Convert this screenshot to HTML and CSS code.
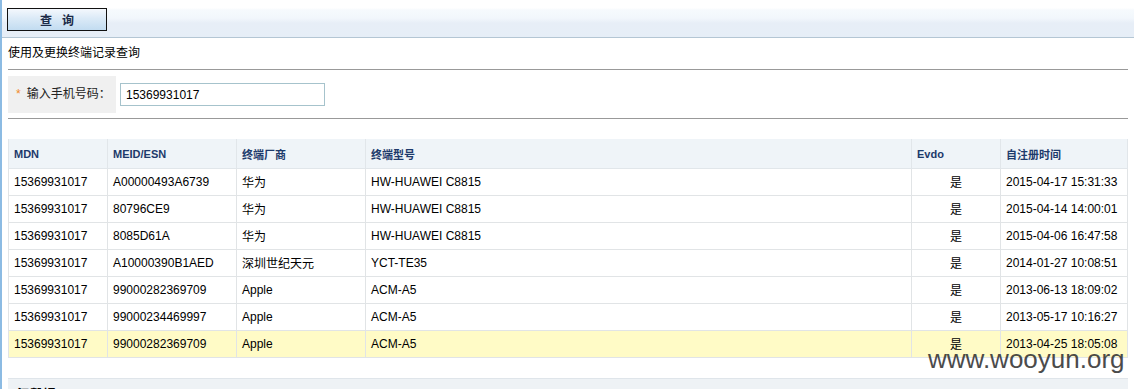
FILE: index.html
```html
<!DOCTYPE html>
<html lang="zh-CN">
<head>
    <meta charset="UTF-8">
    <title>使用及更换终端记录查询</title>
    <link rel="stylesheet" href="styles.css">
</head>
<body>
    <div class="page">
        <div class="toolbar">
            <button class="query-btn">查&nbsp;&nbsp;&nbsp;询</button>
        </div>
        <div class="main">
            <div class="title">使用及更换终端记录查询</div>
            <div class="form-row">
                <div class="label"><span class="star">*</span>输入手机号码：</div>
                <input class="phone" type="text" value="15369931017">
            </div>
            <table class="list" cellspacing="0">
                <tr>
                    <th class="c1">MDN</th>
                    <th class="c2">MEID/ESN</th>
                    <th class="c3">终端厂商</th>
                    <th class="c4">终端型号</th>
                    <th class="c5">Evdo</th>
                    <th class="c6">自注册时间</th>
                </tr>
                <tr>
                    <td>15369931017</td><td>A00000493A6739</td><td>华为</td><td>HW-HUAWEI C8815</td><td class="mid">是</td><td>2015-04-17 15:31:33</td>
                </tr>
                <tr>
                    <td>15369931017</td><td>80796CE9</td><td>华为</td><td>HW-HUAWEI C8815</td><td class="mid">是</td><td>2015-04-14 14:00:01</td>
                </tr>
                <tr>
                    <td>15369931017</td><td>8085D61A</td><td>华为</td><td>HW-HUAWEI C8815</td><td class="mid">是</td><td>2015-04-06 16:47:58</td>
                </tr>
                <tr>
                    <td>15369931017</td><td>A10000390B1AED</td><td>深圳世纪天元</td><td>YCT-TE35</td><td class="mid">是</td><td>2014-01-27 10:08:51</td>
                </tr>
                <tr>
                    <td>15369931017</td><td>99000282369709</td><td>Apple</td><td>ACM-A5</td><td class="mid">是</td><td>2013-06-13 18:09:02</td>
                </tr>
                <tr>
                    <td>15369931017</td><td>99000234469997</td><td>Apple</td><td>ACM-A5</td><td class="mid">是</td><td>2013-05-17 10:16:27</td>
                </tr>
                <tr class="hover">
                    <td>15369931017</td><td>99000282369709</td><td>Apple</td><td>ACM-A5</td><td class="mid">是</td><td>2013-04-25 18:05:08</td>
                </tr>
            </table>
            <div class="tips">温馨提示</div>
        </div>
        <div class="mark">www.wooyun.org</div>
    </div>
</body>
</html>
```

FILE: styles.css
```css
body{
    margin: 0;
    background: #fff;
    font-family: "Liberation Sans", "Noto Sans CJK SC", sans-serif;
    font-size: 12px;
    color: #000;
    overflow: hidden;
}
.page{
    position: relative;
    height: 389px;
    border-left: 2px solid #8cbbe3;
    overflow: hidden;
}
.toolbar{
    height: 38px;
    box-sizing: border-box;
    padding: 8px 0 0 5px;
    background: linear-gradient(#fff 0, #fff 8px, #f6fafd 10px, #f2f7fc 18px, #e7eef7 23px, #e6eef7 37px);
    border-bottom: 1px solid #b4c6d4;
}
.query-btn{
    display: block;
    width: 100px;
    height: 23px;
    border: 1px solid #111;
    background: linear-gradient(#f4f8fd 0, #dbeaf7 45%, #c2dcf1 100%);
    font-family: "Liberation Sans", "Noto Sans CJK SC", sans-serif;
    font-size: 12px;
    font-weight: bold;
    color: #1c2b48;
    padding: 0;
}
.main{
    padding: 0 6px 0 6px;
}
.title{
    height: 31px;
    line-height: 31px;
    border-bottom: 1px solid #999;
}
.form-row{
    display: flex;
    align-items: center;
    padding: 6px 0 5px 0;
    border-bottom: 1px solid #999;
}
.label{
    width: 108px;
    height: 37px;
    line-height: 37px;
    box-sizing: border-box;
    padding-left: 8px;
    background: #f0f0f0;
    color: #222;
}
.star{
    color: #f08a2a;
    margin-right: 6px;
}
.phone{
    margin-left: 4px;
    width: 205px;
    height: 23px;
    box-sizing: border-box;
    border: 1px solid #a6c3cc;
    padding: 0 5px;
    font-family: "Liberation Sans", sans-serif;
    font-size: 12px;
    color: #000;
}
.list{
    margin-top: 20px;
    width: 1120px;
    border-collapse: collapse;
    table-layout: fixed;
}
.list th{
    box-sizing: border-box;
    height: 29px;
    background: #eff4f8;
    color: #1d3a6b;
    font-size: 11px;
    font-weight: bold;
    text-align: left;
    padding: 2px 0 0 5px;
    border: 1px solid #e1e6ea;
    border-top: none;
}
.list td{
    height: 26px;
    padding: 0 0 0 5px;
    border: 1px solid #e1e4e6;
    white-space: nowrap;
}
.list td.mid{
    text-align: center;
    padding: 0;
}
.c1{ width: 99px; }
.c2{ width: 129px; }
.c3{ width: 129px; }
.c4{ width: 546px; }
.c5{ width: 89px; }
.list tr.hover td{
    background: #fffbc6;
}
.tips{
    margin-top: 20px;
    height: 30px;
    box-sizing: border-box;
    padding: 5px 0 0 9px;
    background: #eef2f5;
    border-top: 1px solid #dfe5ea;
    font-weight: bold;
    font-size: 13px;
}
.mark{
    position: absolute;
    left: 926px;
    top: 344px;
    font-family: "Liberation Sans", sans-serif;
    font-size: 26px;
    color: #3c3c3c;
    opacity: 0.92;
}
```
